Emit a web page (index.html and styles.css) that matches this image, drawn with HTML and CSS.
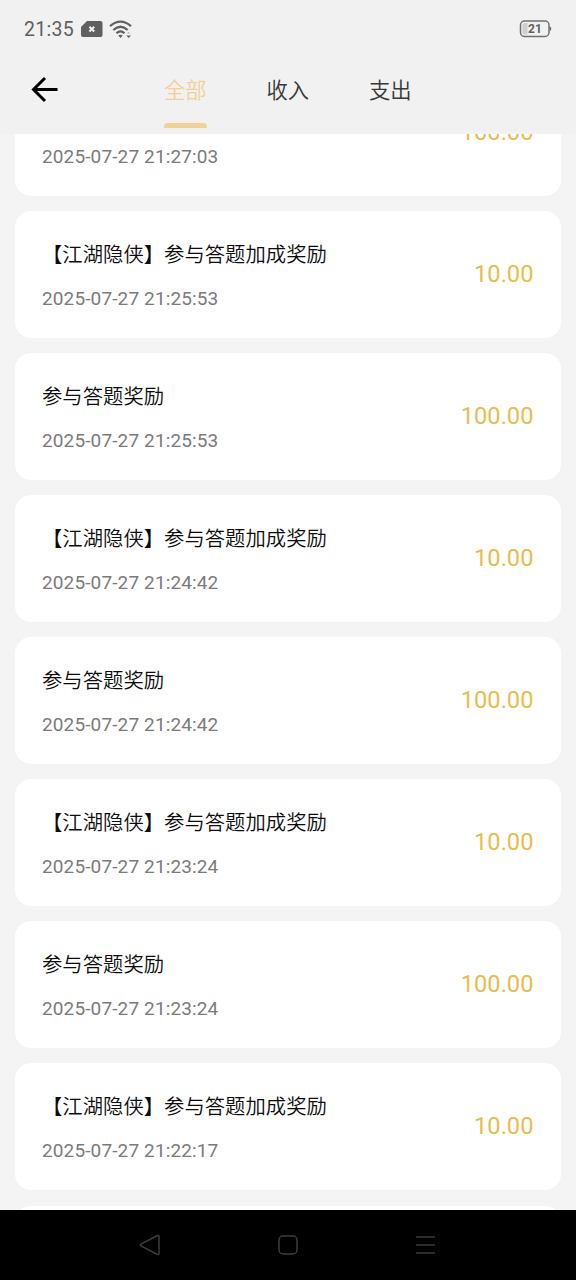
FILE: index.html
```html
<!DOCTYPE html>
<html lang="zh-CN">
<head>
<meta charset="utf-8">
<title>明细</title>
<link rel="stylesheet" href="styles.css">
</head>
<body>
<div class="screen">
  <header class="header">
    <div class="status">
      <span class="clock">21:35</span>
      <svg class="sim" width="22" height="16" viewBox="0 0 22 16"><path d="M6 0H19.5Q21.500 0 21.500 2V14Q21.500 16 19.500 16H2Q0 16 0 14V6Z" fill="#606060"/><path d="M8.400 5.700L13.200 10.500M13.200 5.700L8.400 10.500" stroke="#f1f1f1" stroke-width="2"/></svg>
      <svg class="wifi" width="24" height="19" viewBox="0 0 24 19"><g fill="none" stroke="#606060" stroke-width="2.200"><path d="M1 6.200Q11.500 -2.800 22 6.200"/><path d="M4.300 10Q11.500 3.500 18.700 10"/><path d="M7.500 13.300Q11.500 9.500 15.500 13.300"/></g><path d="M9.200 15.500Q11.500 13.900 13.800 15.500L11.500 18ZM17.300 15.500H22L19.650 18Z" fill="#606060"/><path d="M18 13.600L19.650 11.800L21.300 13.600Z" fill="#b5b5b5"/></svg>
      <svg class="battery" width="33" height="18" viewBox="0 0 33 18"><rect x="1.500" y="1" width="28.500" height="15.500" rx="4" fill="none" stroke="#707070" stroke-width="1.500"/><path d="M30.500 6.500Q32.300 6.500 32.300 8.750T30.500 11Z" fill="#707070"/><path d="M5.500 3H8.500V14.500H5.500Q3.500 14.500 3.500 12.500V5Q3.500 3 5.500 3Z" fill="#cecece"/><text x="16" y="13.200" class="battery-level">21</text></svg>
    </div>
    <nav class="nav">
      <svg class="back" width="28" height="28" viewBox="0 0 28 28"><path d="M26.500 13.500H3M14 2L2.500 13.500L14 25" fill="none" stroke="#000" stroke-width="3"/></svg>
      <div class="tabs">
        <span class="tab active">全部</span>
        <span class="tab">收入</span>
        <span class="tab">支出</span>
      </div>
    </nav>
  </header>
  <main class="list">
    <article class="card"><div class="info"><h2 class="title">参与答题奖励</h2><time class="time">2025-07-27 21:27:03</time></div><span class="amount">100.00</span></article>
    <article class="card"><div class="info"><h2 class="title">【江湖隐侠】参与答题加成奖励</h2><time class="time">2025-07-27 21:25:53</time></div><span class="amount">10.00</span></article>
    <article class="card"><div class="info"><h2 class="title">参与答题奖励</h2><time class="time">2025-07-27 21:25:53</time></div><span class="amount">100.00</span></article>
    <article class="card"><div class="info"><h2 class="title">【江湖隐侠】参与答题加成奖励</h2><time class="time">2025-07-27 21:24:42</time></div><span class="amount">10.00</span></article>
    <article class="card"><div class="info"><h2 class="title">参与答题奖励</h2><time class="time">2025-07-27 21:24:42</time></div><span class="amount">100.00</span></article>
    <article class="card"><div class="info"><h2 class="title">【江湖隐侠】参与答题加成奖励</h2><time class="time">2025-07-27 21:23:24</time></div><span class="amount">10.00</span></article>
    <article class="card"><div class="info"><h2 class="title">参与答题奖励</h2><time class="time">2025-07-27 21:23:24</time></div><span class="amount">100.00</span></article>
    <article class="card"><div class="info"><h2 class="title">【江湖隐侠】参与答题加成奖励</h2><time class="time">2025-07-27 21:22:17</time></div><span class="amount">10.00</span></article>
    <article class="card"></article>
  </main>
  <footer class="system-bar">
    <svg width="22" height="24" viewBox="0 0 22 24"><path d="M18.500 2.500L2 11Q1 12 2 13L18.500 21.500Q20 22 20 20.500V3.500Q20 2 18.500 2.500Z" fill="none" stroke="#3c3c3c" stroke-width="1.500"/></svg>
    <svg width="22" height="24" viewBox="0 0 22 24"><rect x="2" y="3" width="18" height="18" rx="4" fill="none" stroke="#3c3c3c" stroke-width="1.500"/></svg>
    <svg width="22" height="24" viewBox="0 0 22 24"><path d="M0 4H19M0 12H19M0 20H19" stroke="#383838" stroke-width="1.700"/></svg>
  </footer>
</div>
</body>
</html>
```

FILE: styles.css
```css
* { box-sizing: border-box; }
body { margin: 0; font-family: Roboto, "Noto Sans CJK SC", sans-serif; }
.screen { display: flex; flex-direction: column; width: 576px; height: 1280px; overflow: hidden; background: #f4f4f4; }
.header { flex: none; height: 134px; background: #f1f1f1; }
.status { display: flex; align-items: center; height: 58px; padding: 0 24px; color: #606060; }
.clock { width: 57px; font-size: 19.5px; letter-spacing: 0.3px; }
.wifi { margin-left: 6px; }
.battery { margin-left: auto; }
.battery-level { font: 700 12px Roboto, sans-serif; fill: #606060; text-anchor: middle; }
.nav { display: flex; height: 76px; padding-left: 31px; }
.back { margin-top: 18px; }
.tabs { display: flex; gap: 60px; margin-left: 105px; height: 70px; }
.tab { display: flex; flex-direction: column; justify-content: space-between; width: 42.500px; padding-top: 17px; font-size: 21.300px; line-height: 32px; white-space: nowrap; color: #383838; font-weight: 350; }
.tab.active { color: #f3cf96; }
.tab.active::after { content: ""; height: 5px; border-radius: 4px 4px 0 0; background: #f2d194; }
.list { flex: 1; min-height: 0; overflow: hidden; padding: 0 15.500px 0 15px; }
.card { display: flex; align-items: center; justify-content: space-between; height: 126.500px; margin-bottom: 15.550px; padding: 0 27px; border-radius: 16px; background: #fff; }
.card:first-child { margin-top: -65px; }
.card:last-child { margin-top: 16.300px; }
.title { margin: 0; font-size: 20.350px; line-height: 30px; font-weight: 350; color: #0c0c0c; }
.time { display: block; margin-top: 16px; font-size: 19px; line-height: 26px; letter-spacing: 0.130px; color: #7b7b7b; }
.info { padding-top: 3px; }
.amount { padding-bottom: 1px; font-size: 23.700px; line-height: 30px; color: #e8bd50; }
.system-bar { flex: none; display: flex; justify-content: center; align-items: center; gap: 116.500px; height: 70.500px; background: #000; }
```
